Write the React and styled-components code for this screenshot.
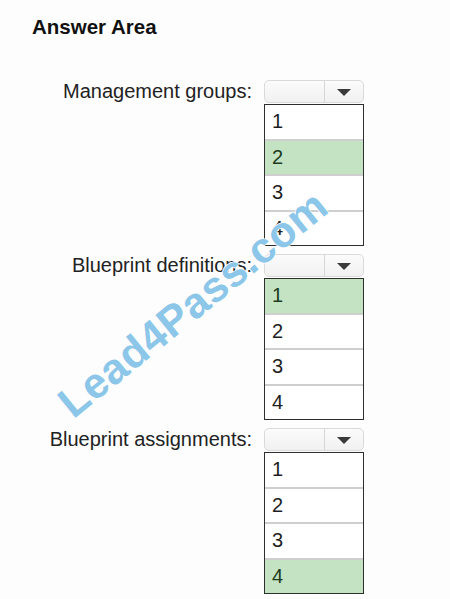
import React from 'react';
import styled, { createGlobalStyle } from 'styled-components';

const GlobalStyle = createGlobalStyle`
  html, body {
    margin: 0;
    padding: 0;
    background: #fdfdfd;
  }
  body {
    font-family: "Liberation Sans", Arial, sans-serif;
    color: #1e1e1e;
  }
`;

const Page = styled.div`
  position: relative;
  width: 450px;
  height: 599px;
  overflow: hidden;
  padding: 16px 0 0 32px;
  box-sizing: border-box;
`;

const Title = styled.h2`
  margin: 0;
  font-size: 20.5px;
  line-height: 22px;
  font-weight: 700;
  color: #111;
`;

const Questions = styled.div`
  display: flex;
  flex-direction: column;
  gap: 8px;
  margin-top: 42px;
`;

const Question = styled.div`
  display: grid;
  grid-template-columns: 220px 100px;
  column-gap: 12px;
  align-items: start;
`;

const Label = styled.div`
  text-align: right;
  font-size: 20px;
  line-height: 23px;
  white-space: nowrap;
  color: #222;
`;

const Picker = styled.div`
  display: flex;
  flex-direction: column;
  gap: 1px;
`;

const Select = styled.div`
  display: flex;
  height: 23px;
  border: 1px solid #dadada;
  border-radius: 5px;
  background: linear-gradient(#fbfbfb, #f1f1f1);
  box-sizing: border-box;
`;

const SelectValue = styled.div`
  flex: 1;
  border-right: 1px solid #d6d6d6;
`;

const SelectButton = styled.div`
  width: 38px;
  display: flex;
  align-items: center;
  justify-content: center;
`;

const Arrow = styled.div`
  width: 0;
  height: 0;
  border-left: 7px solid transparent;
  border-right: 7px solid transparent;
  border-top: 7px solid #3a3a3a;
  margin-top: 2px;
`;

const Options = styled.div`
  border: 1.5px solid #2e2e2e;
  box-sizing: border-box;
  height: 142px;
  display: flex;
  flex-direction: column;
`;

const Option = styled.div`
  flex: 1;
  display: flex;
  align-items: center;
  padding-left: 7px;
  font-size: 20px;
  color: ${p => (p.picked ? '#1d3b1d' : '#1e1e1e')};
  background: ${p => (p.picked ? '#c4e3c2' : '#fff')};
  & + & {
    border-top: 2px solid #cfcfcf;
  }
`;

const Watermark = styled.div`
  position: absolute;
  left: 193px;
  top: 304px;
  transform: translate(-50%, -50%) rotate(-39deg);
  font-family: "Liberation Sans", Arial, sans-serif;
  font-weight: 700;
  font-size: 43px;
  letter-spacing: 0.5px;
  white-space: nowrap;
  color: #8cc6e8;
  -webkit-text-stroke: 1.5px #ffffff;
  paint-order: stroke fill;
  pointer-events: none;
`;

const questions = [
  { label: 'Management groups:', picked: 2 },
  { label: 'Blueprint definitions:', picked: 1 },
  { label: 'Blueprint assignments:', picked: 4 },
];

export default function App() {
  return (
    <>
      <GlobalStyle />
      <Page>
        <Title>Answer Area</Title>
        <Questions>
          {questions.map(q => (
            <Question key={q.label}>
              <Label>{q.label}</Label>
              <Picker>
                <Select>
                  <SelectValue />
                  <SelectButton>
                    <Arrow />
                  </SelectButton>
                </Select>
                <Options>
                  {[1, 2, 3, 4].map(n => (
                    <Option key={n} picked={n === q.picked}>{n}</Option>
                  ))}
                </Options>
              </Picker>
            </Question>
          ))}
        </Questions>
        <Watermark>Lead4Pass.com</Watermark>
      </Page>
    </>
  );
}
